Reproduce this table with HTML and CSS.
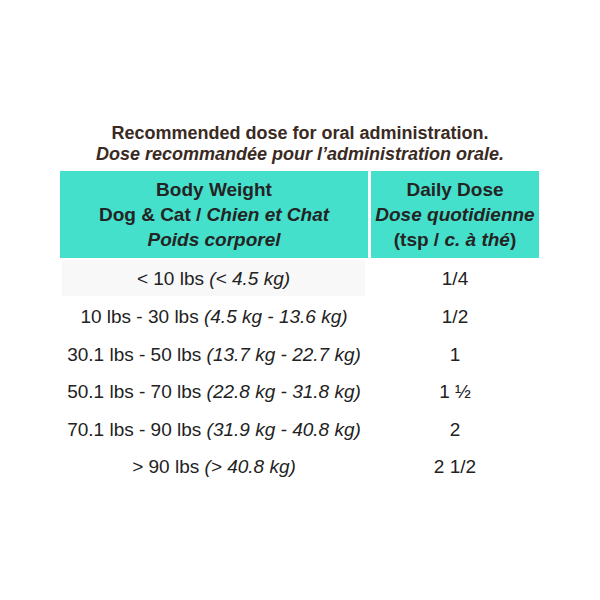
FILE: index.html
```html
<!DOCTYPE html>
<html>
<head>
<meta charset="utf-8">
<link rel="stylesheet" href="styles.css">
</head>
<body>
<div class="page">
  <div class="title">
    <div class="title-en">Recommended dose for oral administration.</div>
    <div class="title-fr">Dose recommandée pour l’administration orale.</div>
  </div>
  <div class="table">
    <div class="head head-weight">
      <div>Body Weight</div>
      <div>Dog &amp; Cat / <i>Chien et Chat</i></div>
      <div><i>Poids corporel</i></div>
    </div>
    <div class="head head-dose">
      <div>Daily Dose</div>
      <div><i>Dose quotidienne</i></div>
      <div>(tsp / <i>c. à thé</i>)</div>
    </div>
    <div class="cell weight shaded"><span>&lt; 10 lbs <i>(&lt; 4.5 kg)</i></span></div>
    <div class="cell dose first"><span>1/4</span></div>
    <div class="cell weight"><span>10 lbs - 30 lbs <i>(4.5 kg - 13.6 kg)</i></span></div>
    <div class="cell dose"><span>1/2</span></div>
    <div class="cell weight"><span>30.1 lbs - 50 lbs <i>(13.7 kg - 22.7 kg)</i></span></div>
    <div class="cell dose"><span>1</span></div>
    <div class="cell weight"><span>50.1 lbs - 70 lbs <i>(22.8 kg - 31.8 kg)</i></span></div>
    <div class="cell dose"><span>1 ½</span></div>
    <div class="cell weight"><span>70.1 lbs - 90 lbs <i>(31.9 kg - 40.8 kg)</i></span></div>
    <div class="cell dose"><span>2</span></div>
    <div class="cell weight"><span>&gt; 90 lbs <i>(&gt; 40.8 kg)</i></span></div>
    <div class="cell dose"><span>2 1/2</span></div>
  </div>
</div>
</body>
</html>
```
FILE: styles.css
```css
html, body {
  margin: 0;
  padding: 0;
  background: #ffffff;
}
.page {
  width: 600px;
  height: 600px;
  font-family: "Liberation Sans", Arial, sans-serif;
  padding-top: 123px;
  box-sizing: border-box;
}
.title {
  text-align: center;
  color: #3a2a1f;
  font-weight: bold;
  font-size: 18px;
  line-height: 21px;
}
.title-fr {
  font-style: italic;
}
.table {
  margin: 6px 0 0 60px;
  width: 479px;
  display: grid;
  grid-template-columns: 308px 168px;
  column-gap: 3px;
  grid-template-rows: 87px repeat(6, 37.5px);
}
.head {
  background: #44e0cb;
  color: #242424;
  font-weight: bold;
  font-size: 19px;
  line-height: 25px;
  text-align: center;
  display: flex;
  flex-direction: column;
  justify-content: center;
}
.cell {
  display: flex;
  align-items: center;
  justify-content: center;
  padding-top: 6px;
  font-size: 19px;
  color: #222222;
  white-space: nowrap;
}
.weight.shaded {
  background: #f8f8f8;
  margin: 2px 3px 0 2px;
  padding-top: 2px;
}
.dose.first {
  padding-top: 4px;
}
```
